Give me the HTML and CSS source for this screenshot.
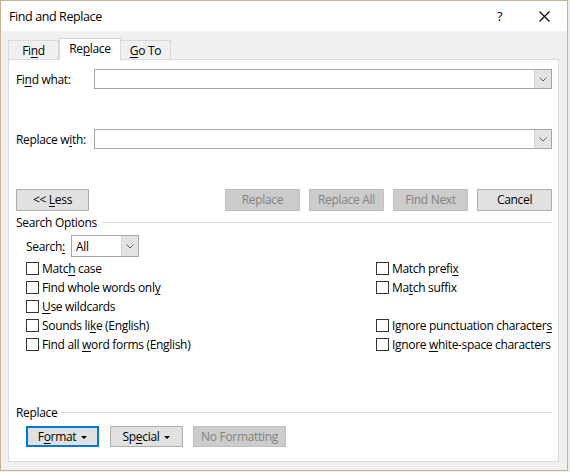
FILE: index.html
```html
<!DOCTYPE html>
<html>
<head>
<meta charset="utf-8">
<link rel="stylesheet" href="styles.css">
</head>
<body>
<div class="window">
  <div class="titlebar">
    <span class="title">Find and Replace</span>
    <span class="help">?</span>
    <span class="close"><svg width="11" height="11" viewBox="0 0 11 11"><path d="M0.5 0.5L10.5 10.5M10.5 0.5L0.5 10.5" stroke="#000" stroke-width="1.1" fill="none"/></svg></span>
  </div>
  <div class="client">
    <div class="tabs">
      <div class="tab tab-find"><span>Fi<u>n</u>d</span></div>
      <div class="tab tab-active"><span>Re<u>p</u>lace</span></div>
      <div class="tab tab-goto"><span><u>G</u>o To</span></div>
    </div>
    <div class="panel">
      <div class="field-row">
        <span class="field-label">Fi<u>n</u>d what:</span>
        <div class="combo combo-wide">
          <span class="combo-text"></span>
          <span class="combo-btn"><svg width="8" height="5" viewBox="0 0 8 5"><path d="M0.5 0.5L4 4L7.5 0.5" stroke="#606060" fill="none"/></svg></span>
        </div>
      </div>
      <div class="field-row replace-row">
        <span class="field-label">Replace w<u>i</u>th:</span>
        <div class="combo combo-wide">
          <span class="combo-text"></span>
          <span class="combo-btn"><svg width="8" height="5" viewBox="0 0 8 5"><path d="M0.5 0.5L4 4L7.5 0.5" stroke="#606060" fill="none"/></svg></span>
        </div>
      </div>
      <div class="button-row">
        <button class="btn btn-less"><span>&lt;&lt; <u>L</u>ess</span></button>
        <div class="spacer"></div>
        <button class="btn btn-disabled"><span>Replace</span></button>
        <button class="btn btn-disabled"><span>Replace All</span></button>
        <button class="btn btn-disabled"><span>Find Next</span></button>
        <button class="btn btn-cancel"><span>Cancel</span></button>
      </div>
      <div class="section-head search-head">
        <span class="section-title">Search Options</span>
        <span class="rule"></span>
      </div>
      <div class="options">
        <div class="search-row">
          <span class="search-label">Search<u>:</u></span>
          <div class="combo combo-small">
            <span class="combo-text">All</span>
            <span class="combo-btn"><svg width="8" height="5" viewBox="0 0 8 5"><path d="M0.5 0.5L4 4L7.5 0.5" stroke="#606060" fill="none"/></svg></span>
          </div>
        </div>
        <div class="checks">
          <div class="check"><span class="box"></span><span>Matc<u>h</u> case</span></div>
          <div class="check"><span class="box"></span><span>Match prefi<u>x</u></span></div>
          <div class="check"><span class="box"></span><span>Find whole words onl<u>y</u></span></div>
          <div class="check"><span class="box"></span><span>Ma<u>t</u>ch suffix</span></div>
          <div class="check"><span class="box"></span><span><u>U</u>se wildcards</span></div>
          <div class="check empty"></div>
          <div class="check"><span class="box"></span><span>Sounds li<u>k</u>e (English)</span></div>
          <div class="check"><span class="box"></span><span>Ignore punctuation character<u>s</u></span></div>
          <div class="check"><span class="box"></span><span>Find all <u>w</u>ord forms (English)</span></div>
          <div class="check"><span class="box"></span><span>Ignore <u>w</u>hite-space characters</span></div>
        </div>
      </div>
      <div class="section-head replace-head">
        <span class="section-title">Replace</span>
        <span class="rule"></span>
      </div>
      <div class="bottom-row">
        <button class="btn btn-format"><span>F<u>o</u>rmat</span><span class="caret"></span></button>
        <button class="btn btn-special"><span>Sp<u>e</u>cial</span><span class="caret"></span></button>
        <button class="btn btn-disabled btn-noformat"><span>No Formatting</span></button>
      </div>
    </div>
  </div>
</div>
</body>
</html>
```

FILE: styles.css
```css
* { box-sizing: border-box; }

html, body {
  margin: 0;
  padding: 0;
  background: #ececec;
}

body {
  font-family: "Open Sans", "Noto Sans", sans-serif;
  font-size: 12px;
  letter-spacing: -0.32px;
  color: #000;
  width: 570px;
  height: 472px;
  overflow: hidden;
}

u { text-decoration: underline; text-underline-offset: 2px; }

.window {
  width: 568px;
  height: 471px;
  border: 1px solid #c8b48f;
  background: #f0f0f0;
  display: flex;
  flex-direction: column;
}

.titlebar {
  height: 30px;
  background: #fff;
  display: flex;
  align-items: center;
  padding-left: 8px;
  flex-shrink: 0;
}

.title {
  font-size: 12.5px;
  flex: 1;
  letter-spacing: -0.4px;
}

.help {
  font-size: 13px;
  width: 12px;
  margin-right: 30px;
  margin-top: -1px;
}

.close {
  width: 11px;
  height: 11px;
  margin-right: 17px;
  display: flex;
}

.client {
  flex: 1;
  padding: 7px 0 0 7px;
}

.tabs {
  display: flex;
  align-items: flex-end;
  height: 21px;
}

.tab {
  height: 19px;
  background: #f0f0f0;
  border: 1px solid #d9d9d9;
  border-bottom: none;
  display: flex;
  align-items: center;
  justify-content: center;
  line-height: 1;
  padding-top: 1px;
}

.tab-find { width: 51px; }
.tab-goto { width: 50px; border-left: none; }

.tab-active {
  width: 62px;
  height: 22px;
  background: #fff;
  margin-bottom: -1px;
  position: relative;
  z-index: 1;
  padding-top: 0;
  padding-bottom: 1px;
}

.panel {
  width: 551px;
  height: 403px;
  background: #fff;
  border: 1px solid #d9d9d9;
  padding: 9px 6px 0 7px;
}

.field-row {
  display: flex;
  align-items: center;
  height: 20px;
}

.replace-row { margin-top: 40px; }

.field-label { width: 78px; white-space: nowrap; }

.combo {
  height: 100%;
  border: 1px solid #a5a5a5;
  background: #fff;
  display: flex;
  align-items: stretch;
}

.combo-wide { width: 458px; }

.combo-text {
  flex: 1;
  padding-left: 4px;
  display: flex;
  align-items: center;
}

.combo-btn {
  width: 17px;
  background: #e3e3e3;
  border-left: 1px solid #d4d4d4;
  display: flex;
  align-items: center;
  justify-content: center;
}

.button-row {
  display: flex;
  margin-top: 40px;
  height: 22px;
  gap: 9px;
}

.spacer { flex: 1; }

.btn {
  font-family: inherit;
  font-size: 12px;
  letter-spacing: -0.32px;
  height: 100%;
  width: 75px;
  padding: 0;
  margin: 0;
  background: #e1e1e1;
  border: 1px solid #adadad;
  color: #000;
  display: flex;
  align-items: center;
  justify-content: center;
  line-height: 1;
  white-space: pre;
}

.btn-less { width: 73px; }

.btn-disabled {
  background: #cccccc;
  border-color: #bfbfbf;
  color: #838383;
}

.section-head {
  display: flex;
  align-items: center;
  height: 16px;
  gap: 5px;
}

.search-head { margin-top: 3px; }

.rule {
  flex: 1;
  height: 1px;
  background: #dcdcdc;
}

.options { padding-left: 10px; }

.search-row {
  display: flex;
  align-items: center;
  height: 22px;
  margin-top: 5px;
}

.search-label { width: 45px; }

.combo-small { width: 68px; }

.checks {
  display: grid;
  grid-template-columns: 350px 1fr;
  grid-auto-rows: 19px;
  margin-top: 2px;
}

.check {
  display: flex;
  align-items: center;
  gap: 3px;
  white-space: nowrap;
}

.box {
  width: 13px;
  height: 13px;
  border: 1px solid #333;
  background: #fff;
  flex-shrink: 0;
}

.replace-head { margin-top: 50px; }

.bottom-row {
  display: flex;
  margin-top: 6px;
  padding-left: 10px;
  height: 21px;
}

.btn-format {
  width: 73px;
  border: 2px solid #0078d7;
}

.btn-special {
  width: 73px;
  margin-left: 11px;
}

.btn-noformat {
  width: 93px;
  margin-left: 10px;
}

.caret {
  display: inline-block;
  width: 0;
  height: 0;
  border-left: 3px solid transparent;
  border-right: 3px solid transparent;
  border-top: 3px solid #000;
  margin-left: 5px;
  margin-top: 1px;
}
```
